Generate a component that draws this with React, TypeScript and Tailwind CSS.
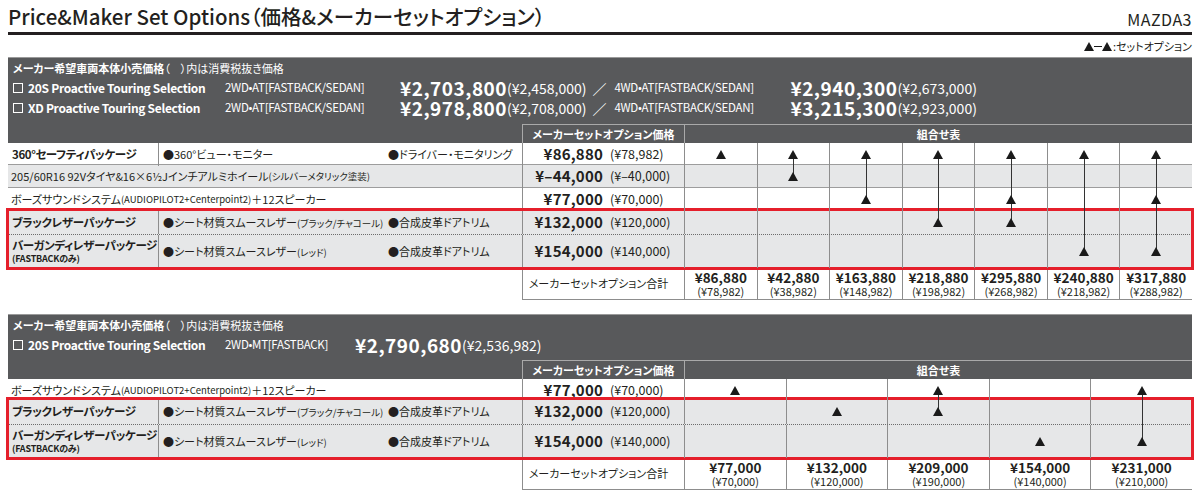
import React from "react";

const DARK = "bg-[#58595b]";

const Tri = ({ size = 10 }: { size?: number }) => (
  <svg width={size} height={size - 1} viewBox="0 0 10 9" className="relative z-10 block">
    <polygon points="5,0 10,9 0,9" fill="#1a1a1a" />
  </svg>
);

// which rows have a ▲ in each combination column
const spans = (marks: number[][], c: number) => {
  const rs = marks.map((r, i) => (r[c] ? i : -1)).filter((i) => i >= 0);
  return { first: Math.min(...rs), last: Math.max(...rs) };
};

const ComboCells = ({ marks, r }: { marks: number[][]; r: number }) => (
  <>
    {marks[r].map((m, c) => {
      const { first, last } = spans(marks, c);
      const up = r > first && r <= last;
      const down = r >= first && r < last;
      return (
        <div key={c} className="relative flex items-center justify-center border-l border-[#8d8d8d]">
          {up && <div className="absolute left-1/2 top-[-1px] h-[calc(50%+1px)] w-px bg-[#333]" />}
          {down && <div className="absolute left-1/2 top-1/2 bottom-[-1px] w-px bg-[#333]" />}
          {m ? <Tri /> : null}
        </div>
      );
    })}
  </>
);

const Price = ({ main, ex }: { main: string; ex: string }) => (
  <div className="flex items-center whitespace-nowrap border-l border-[#8d8d8d]">
    <span className="w-[80px] text-right text-[15px] font-bold tracking-[0.2px]">{main}</span>
    <span className="ml-[7px] text-[12.5px]">{ex}</span>
  </div>
);

const Check = () => <span className="mr-[5px] inline-block h-[10px] w-[10px] border border-white" />;

type Row =
  | { kind: "pkg"; name: React.ReactNode; f1: React.ReactNode; f2: string; main: string; ex: string }
  | { kind: "wide"; text: React.ReactNode; main: string; ex: string };

const PkgName = ({ row }: { row: Row }) =>
  row.kind === "pkg" ? (
    <>
      <div className="flex flex-col justify-center whitespace-nowrap pl-[4px] text-[11.5px] font-bold leading-[13px] tracking-[-0.4px]">
        {row.name}
      </div>
      <div className="grid grid-cols-[225px_1fr] items-center whitespace-nowrap border-l border-[#8d8d8d] pl-[4px] text-[11px]">
        <span>{row.f1}</span>
        <span>{row.f2}</span>
      </div>
    </>
  ) : (
    <div className="col-span-2 flex items-center whitespace-nowrap pl-[3px] text-[11px]">{row.text}</div>
  );

const sm = (t: string) => <span className="text-[9.5px]">{t}</span>;

const leatherRows: Row[] = [
  {
    kind: "pkg",
    name: "ブラックレザーパッケージ",
    f1: <>●シート材質スムースレザー{sm("(ブラック/チャコール)")}</>,
    f2: "●合成皮革ドアトリム",
    main: "¥132,000",
    ex: "(¥120,000)",
  },
  {
    kind: "pkg",
    name: (
      <>
        <span>バーガンディレザーパッケージ</span>
        <span className="text-[9px] tracking-[-0.2px]">(FASTBACKのみ)</span>
      </>
    ),
    f1: <>●シート材質スムースレザー{sm("(レッド)")}</>,
    f2: "●合成皮革ドアトリム",
    main: "¥154,000",
    ex: "(¥140,000)",
  },
];

const bose: Row = {
  kind: "wide",
  text: (
    <>
      ボーズサウンドシステム{sm("(AUDIOPILOT2+Centerpoint2)")}＋12スピーカー
    </>
  ),
  main: "¥77,000",
  ex: "(¥70,000)",
};

const Table = ({
  cols,
  head,
  plain,
  plainH,
  plainBg,
  marks,
  redH,
  totals,
}: {
  cols: string;
  head: React.ReactNode;
  plain: Row[];
  plainH: string[];
  plainBg: string[];
  marks: number[][];
  redH: string[];
  totals: [string, string][];
}) => {
  const n = plain.length;
  return (
    <div className="text-[#231f20]">
      <div className={`${DARK} border-t border-[#9a9a9a] text-white`}>{head}</div>
      <div className={`grid ${cols} h-[19px] ${DARK} text-white`}>
        <div className="col-span-2" />
        <div className="flex items-center justify-center whitespace-nowrap border-l border-t border-[#a9a9a9] text-[11px] font-bold">
          メーカーセットオプション価格
        </div>
        <div
          className="flex items-center justify-center border-l border-t border-[#a9a9a9] text-[11px] font-bold"
          style={{ gridColumn: `4 / span ${totals.length}` }}
        >
          組合せ表
        </div>
      </div>
      {plain.map((row, i) => (
        <div key={i} className={`grid ${cols} ${plainH[i]} ${plainBg[i]} border-b border-[#9d9d9d]`}>
          <PkgName row={row} />
          <Price main={row.main} ex={row.ex} />
          <ComboCells marks={marks} r={i} />
        </div>
      ))}
      <div className="bg-[#e6e7e8] outline-[3px] outline-solid outline-[#e51f2b] -outline-offset-[1px]">
        {leatherRows.map((row, j) => (
          <div
            key={j}
            className={`grid ${cols} ${redH[j]} ${j === 0 ? "border-b border-dotted border-[#6d6d6d]" : ""}`}
          >
            <PkgName row={row} />
            <Price main={row.main} ex={row.ex} />
            <ComboCells marks={marks} r={n + j} />
          </div>
        ))}
      </div>
      <div className={`grid ${cols} h-[32px]`}>
        <div className="col-span-2" />
        <div className="flex items-center justify-center whitespace-nowrap border-b border-l border-[#8d8d8d] pr-[10px] text-[11px]">
          メーカーセットオプション合計
        </div>
        {totals.map(([a, b], i) => (
          <div
            key={i}
            className="flex flex-col items-center justify-center whitespace-nowrap border-b border-l border-[#8d8d8d]"
          >
            <span className="text-[13.5px] font-bold leading-[16px]">{a}</span>
            <span className="text-[11px] leading-[13px]">{b}</span>
          </div>
        ))}
      </div>
    </div>
  );
};

const HeadLine = () => (
  <div className="flex h-[20px] items-center whitespace-nowrap pl-[5px] text-[11px]">
    <span className="font-bold">メーカー希望車両本体小売価格</span>
    <span>（　）内は消費税抜き価格</span>
  </div>
);

const Variant = ({ w, t }: { w: string; t: string }) => (
  <span className={`${w} text-[11.5px] tracking-[-0.3px]`}>{t}</span>
);

const Amount = ({ price, ex }: { price: string; ex: string }) => (
  <>
    <span className="text-[19px] font-bold leading-[20px] tracking-[0.5px]">{price}</span>
    <span className="text-[14px] leading-[20px]">{ex}</span>
  </>
);

const Model = ({
  name,
  variant,
  vw,
  price,
  ex,
  children,
}: {
  name: string;
  variant: string;
  vw: string;
  price: string;
  ex: string;
  children?: React.ReactNode;
}) => (
  <div className="flex h-[20px] items-center whitespace-nowrap pl-[5px]">
    <span className="flex w-[212px] items-center text-[12px] font-bold tracking-[-0.3px]">
      <Check />
      {name}
    </span>
    <Variant w={vw} t={variant} />
    <Amount price={price} ex={ex} />
    {children}
  </div>
);

export default function App() {
  const cols1 = "grid-cols-[150px_364px_162px_repeat(7,minmax(0,1fr))]";
  const cols2 = "grid-cols-[150px_364px_162px_repeat(5,minmax(0,1fr))]";

  const tire: Row = {
    kind: "wide",
    text: (
      <>
        205/60R16 92Vタイヤ&16×6½Jインチアルミホイール{sm("(シルバーメタリック塗装)")}
      </>
    ),
    main: "¥–44,000",
    ex: "(¥–40,000)",
  };
  const safety: Row = {
    kind: "pkg",
    name: "360°セーフティパッケージ",
    f1: "●360°ビュー・モニター",
    f2: "●ドライバー・モニタリング",
    main: "¥86,880",
    ex: "(¥78,982)",
  };

  return (
    <div className="h-[499px] w-[1200px] overflow-hidden bg-white px-[8px] font-['Noto_Sans_CJK_JP',sans-serif] text-[#231f20] [font-feature-settings:'palt']">
      <div className="flex h-[35px] items-end justify-between border-b-[3px] border-[#231f20] pb-[3px]">
        <h1 className="whitespace-nowrap text-[20.5px] font-medium leading-[26px]">
          Price&Maker Set Options（価格&メーカーセットオプション）
        </h1>
        <span className="text-[16px] leading-[20px] tracking-[0.5px]">MAZDA3</span>
      </div>
      <div className="flex h-[22px] items-center justify-end text-[11px]">
        <Tri size={10} />
        <span className="h-px w-[8px] bg-[#1a1a1a]" />
        <Tri size={10} />
        <span className="ml-[1px]">:セットオプション</span>
      </div>

      <Table
        cols={cols1}
        head={
          <div className="pb-[6px]">
            <HeadLine />
            <Model
              name="20S Proactive Touring Selection"
              variant="2WD•AT[FASTBACK/SEDAN]"
              vw="w-[175px]"
              price="¥2,703,800"
              ex="(¥2,458,000)"
            >
              <span className="ml-[6px] w-[22px] text-[14px] leading-[20px]">／</span>
              <Variant w="w-[176px]" t="4WD•AT[FASTBACK/SEDAN]" />
              <Amount price="¥2,940,300" ex="(¥2,673,000)" />
            </Model>
            <Model
              name="XD Proactive Touring Selection"
              variant="2WD•AT[FASTBACK/SEDAN]"
              vw="w-[175px]"
              price="¥2,978,800"
              ex="(¥2,708,000)"
            >
              <span className="ml-[6px] w-[22px] text-[14px] leading-[20px]">／</span>
              <Variant w="w-[176px]" t="4WD•AT[FASTBACK/SEDAN]" />
              <Amount price="¥3,215,300" ex="(¥2,923,000)" />
            </Model>
          </div>
        }
        plain={[safety, tire, bose]}
        plainH={["h-[22px]", "h-[23px]", "h-[22px]"]}
        plainBg={["bg-white", "bg-[#e6e7e8]", "bg-white"]}
        marks={[
          [1, 1, 1, 1, 1, 1, 1],
          [0, 1, 0, 0, 0, 0, 0],
          [0, 0, 1, 0, 1, 0, 1],
          [0, 0, 0, 1, 1, 0, 0],
          [0, 0, 0, 0, 0, 1, 1],
        ]}
        redH={["h-[25px]", "h-[33px]"]}
        totals={[
          ["¥86,880", "(¥78,982)"],
          ["¥42,880", "(¥38,982)"],
          ["¥163,880", "(¥148,982)"],
          ["¥218,880", "(¥198,982)"],
          ["¥295,880", "(¥268,982)"],
          ["¥240,880", "(¥218,982)"],
          ["¥317,880", "(¥288,982)"],
        ]}
      />

      <div className="h-[14px]" />

      <Table
        cols={cols2}
        head={
          <div className="pb-[5px]">
            <HeadLine />
            <Model
              name="20S Proactive Touring Selection"
              variant="2WD•MT[FASTBACK]"
              vw="w-[130px]"
              price="¥2,790,680"
              ex="(¥2,536,982)"
            />
          </div>
        }
        plain={[bose]}
        plainH={["h-[20px]"]}
        plainBg={["bg-white"]}
        marks={[
          [1, 0, 1, 0, 1],
          [0, 1, 1, 0, 0],
          [0, 0, 0, 1, 1],
        ]}
        redH={["h-[26px]", "h-[33px]"]}
        totals={[
          ["¥77,000", "(¥70,000)"],
          ["¥132,000", "(¥120,000)"],
          ["¥209,000", "(¥190,000)"],
          ["¥154,000", "(¥140,000)"],
          ["¥231,000", "(¥210,000)"],
        ]}
      />
    </div>
  );
}
